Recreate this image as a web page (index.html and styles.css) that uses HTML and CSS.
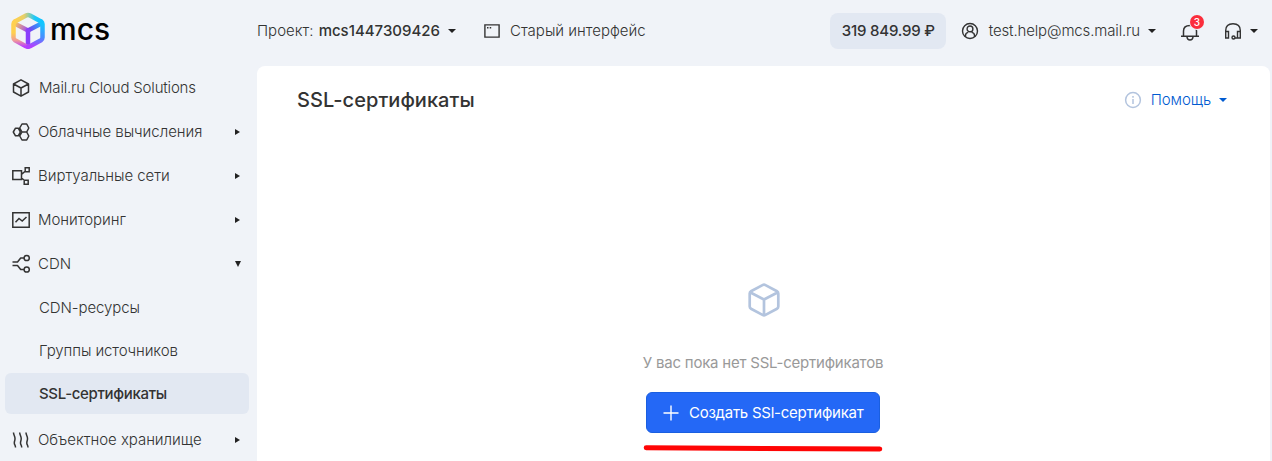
FILE: index.html
```html
<!DOCTYPE html>
<html lang="ru">
<head>
<meta charset="utf-8">
<title>SSL-сертификаты</title>
<link rel="stylesheet" href="styles.css">
</head>
<body>
<svg class="defs" width="0" height="0">
  <defs>
    <linearGradient id="g-left" x1="0" y1="0" x2="0" y2="1"><stop offset="0.45" stop-color="#ffd04f"/><stop offset="0.75" stop-color="#f09a9a"/><stop offset="1" stop-color="#b93cff"/></linearGradient>
    <linearGradient id="g-top" gradientUnits="userSpaceOnUse" x1="4" y1="0" x2="30" y2="0"><stop offset="0" stop-color="#ffd04f"/><stop offset="0.35" stop-color="#e8cf68"/><stop offset="0.75" stop-color="#20c8f8"/><stop offset="1" stop-color="#10c4ff"/></linearGradient>
    <linearGradient id="g-right" gradientUnits="userSpaceOnUse" x1="26" y1="8" x2="20" y2="34"><stop offset="0.1" stop-color="#14c6ff"/><stop offset="0.6" stop-color="#4a8cff"/><stop offset="1" stop-color="#b040ff"/></linearGradient>
    <linearGradient id="g-in" gradientUnits="userSpaceOnUse" x1="2" y1="9" x2="17" y2="17"><stop offset="0.1" stop-color="#ffd04f"/><stop offset="1" stop-color="#a04cf0"/></linearGradient>
    <linearGradient id="g-in2" gradientUnits="userSpaceOnUse" x1="31" y1="9" x2="17" y2="17"><stop offset="0" stop-color="#10c4ff"/><stop offset="1" stop-color="#7a3cf0"/></linearGradient>
  </defs>
</svg>
<div class="app">
  <aside class="sidebar">
    <a class="logo">
      <svg width="34" height="38" viewBox="0 0 34 38" fill="none" stroke-width="4.500" stroke-linejoin="round" stroke-linecap="round">
        <path stroke="url(#g-in)" d="M3.5 11.5 17 18.5"/>
        <path stroke="url(#g-in2)" d="M30.500 11.500 17 18.500"/>
        <path stroke="#8a3ffc" d="M17 18.500V34"/>
        <path stroke="url(#g-left)" d="M4 9.500Q2.500 10.400 2.500 12V25.500Q2.500 27.300 4 28.200L15 34.300Q16 34.800 17 34.800"/>
        <path stroke="url(#g-right)" d="M30 9.500Q31.500 10.400 31.500 12V25.500Q31.500 27.300 30 28.200L19 34.300Q18 34.800 17 34.800"/>
        <path stroke="url(#g-top)" d="M4 9.500 15 3.500Q17 2.400 19 3.500L30 9.500"/>
      </svg>
      <span class="logo-text">mcs</span>
    </a>
    <nav class="nav">
      <a class="item"><svg class="ico" viewBox="0 0 20 20"><path d="M10 1.800 17.500 6V14L10 18.200 2.500 14V6ZM2.500 6 10 10 17.500 6M10 10V18.200"/></svg><span class="brand">Mail.ru Cloud Solutions</span></a>
      <a class="item"><svg class="ico" viewBox="0 0 20 20"><path d="M4.500 6.200H7.300L9.300 10 7.300 13.800H4.500L2.300 10ZM11 2H15.700L17.800 6 15.700 10H11L8.700 6ZM15.700 10 17.800 14 15.700 18H11L8.700 14 11 10"/></svg><span>Облачные вычисления</span><i class="arr"></i></a>
      <a class="item"><svg class="ico sharp" viewBox="0 0 20 20"><path d="M1.800 4.800H10.500V13.500H1.800ZM14.200 1.800H18.200V5.800H14.200ZM13.200 14.200H17.200V18.200H13.200ZM10.500 8.300 14.500 5M10 11.500 13.500 14.500"/></svg><span>Виртуальные сети</span><i class="arr"></i></a>
      <a class="item"><svg class="ico sharp" viewBox="0 0 20 20"><path d="M1.800 2.800H18.200V17.200H1.800ZM4.500 12.300 8 8.500 11.200 11 15.500 7"/></svg><span>Мониторинг</span><i class="arr"></i></a>
      <a class="item"><svg class="ico" viewBox="0 0 20 20"><path d="M1.500 8H6.500L9.700 4H13M1.500 11.500H6.500L9.700 15.500H13"/><circle cx="15.700" cy="4" r="2.600"/><circle cx="15.700" cy="15.500" r="2.600"/></svg><span>CDN</span><i class="arr down"></i></a>
      <div class="sub">
        <a class="subitem"><span>CDN-ресурсы</span></a>
        <a class="subitem"><span>Группы источников</span></a>
        <a class="subitem active"><span>SSL-сертификаты</span></a>
      </div>
      <a class="item"><svg class="ico" viewBox="0 0 20 20"><path d="M2.500 2.500C2.500 5 4 6 4 8.500S3.300 11 3.300 13 4.500 15 4.500 17.500M8.700 2.500C8.700 5 10.200 6 10.200 8.500S9.500 11 9.500 13 10.700 15 10.700 17.500M15 2.500C15 5 16.500 6 16.500 8.500S15.800 11 15.800 13 17 15 17 17.500"/></svg><span>Объектное хранилище</span><i class="arr"></i></a>
    </nav>
  </aside>
  <div class="main">
    <header class="header">
      <span class="project">Проект: <b>mcs1447309426</b></span><i class="caret c1"></i>
      <svg class="win" width="16" height="14" viewBox="0 0 16 14"><path fill="none" stroke="#333" stroke-width="1.400" d="M.9.900H15.100V13.100H.9Z"/><path fill="#333" d="M3 3h1.500v1.500H3zM5.700 3h1.500v1.500H5.700z"/></svg>
      <span>Старый интерфейс</span>
      <span class="balance">319 849.99 ₽</span>
      <svg class="user" width="18" height="18" viewBox="0 0 18 18" fill="none" stroke="#333" stroke-width="1.400"><circle cx="9" cy="9" r="7.500"/><circle cx="9" cy="6.900" r="2.900"/><path d="M4.500 14.800V13.500Q4.500 10.900 7.300 10.400M13.500 14.800V13.500Q13.500 10.900 10.700 10.400"/></svg>
      <span class="email">test.help@mcs.mail.ru</span><i class="caret c2"></i>
      <span class="bell">
        <svg width="20" height="20" viewBox="0 0 20 20" fill="none" stroke="#333" stroke-width="1.500"><path d="M1 14.300H19M3.500 14.300V9Q3.500 3.500 10 3.500 16.500 3.500 16.500 9V14.300M7 15Q7.300 18 10 18T13 15"/></svg>
        <span class="badge">3</span>
      </span>
      <svg class="head" width="18" height="18" viewBox="0 0 18 18" fill="none" stroke="#333" stroke-width="1.400"><path d="M1.700 10V8.500Q1.700 1.700 9 1.700T16.300 8.500V10M1.700 9.500H4.500V16H1.700ZM13.500 9.500H16.300V16H13.500ZM13.500 16H11"/><circle cx="9.500" cy="15.500" r="1.500"/></svg>
      <i class="caret c3"></i>
    </header>
    <section class="panel">
      <div class="panel-head">
        <h1 class="title">SSL-сертификаты</h1>
        <a class="help">
          <svg width="18" height="18" viewBox="0 0 18 18" fill="none" stroke="#b3c4de" stroke-width="1.500"><circle cx="9" cy="9" r="7.400"/><path d="M9 8V13M9 5V6.700"/></svg>
          <span>Помощь</span><i class="caret blue"></i>
        </a>
      </div>
      <div class="empty">
        <svg class="cube" width="32" height="34" viewBox="0 0 32 34" fill="none" stroke="#b3c4de" stroke-width="2.700" stroke-linejoin="round" stroke-linecap="round"><path d="M14.500 2.100Q16 1.300 17.500 2.100L29 8.300Q30.300 9 30.300 10.500V23.500Q30.300 25 29 25.700L17.500 31.900Q16 32.700 14.500 31.900L3 25.700Q1.700 25 1.700 23.500V10.500Q1.700 9 3 8.300ZM2.500 9.500 16 16.500 29.500 9.500M16 16.500V32"/></svg>
        <p class="note">У вас пока нет SSL-сертификатов</p>
        <button class="create"><svg width="16" height="16" viewBox="0 0 16 16"><path stroke="#fff" stroke-width="1.400" d="M8 .5V15.500M.5 8H15.500"/></svg><span>Создать SSl-сертификат</span></button>
        <svg class="mark" width="240" height="8" viewBox="0 0 240 8"><path stroke="#ff0505" stroke-width="5" stroke-linecap="round" d="M3.200 3.800 236.800 5"/></svg>
      </div>
    </section>
  </div>
</div>
</body>
</html>
```
FILE: styles.css
```css
* { box-sizing: border-box; }
body { margin: 0; width: 1272px; height: 461px; overflow: hidden; background: #f0f3f8; color: #333; font: 300 15px/20px Inter, "Liberation Sans", sans-serif; }
.defs { display: block; height: 0; }
.app { display: flex; height: 461px; }
span { white-space: nowrap; }
svg { flex: none; display: block; }

.sidebar { width: 257px; flex: none; display: flex; flex-direction: column; }
.logo { height: 66px; flex: none; display: flex; align-items: flex-start; padding: 12px 0 0 11px; }
.logo-text { font: 500 30px/38px Inter, sans-serif; letter-spacing: 0; color: #000; margin-left: 5px; margin-top: -2px; }
.nav { display: flex; flex-direction: column; }
.item { height: 44px; display: flex; align-items: center; padding: 0 15px 0 11px; gap: 7px; letter-spacing: -0.040px; }
.brand { letter-spacing: -0.180px; padding-left: 1px; }
.ico { width: 20px; height: 20px; fill: none; stroke: #333; stroke-width: 1.500; stroke-linejoin: round; }
.sharp { stroke-linejoin: miter; }
.arr { margin-left: auto; margin-right: 2px; border-left: 5px solid #222; border-top: 3.500px solid transparent; border-bottom: 3.500px solid transparent; }
.arr.down { margin-right: 1px; border-top: 6px solid #222; border-bottom: 0; border-left: 3.500px solid transparent; border-right: 3.500px solid transparent; }
.sub { display: flex; flex-direction: column; padding: 0 8px 4px 5px; letter-spacing: -0.100px; }
.subitem { height: 43px; display: flex; align-items: center; padding-left: 34px; }
.subitem.active { height: 41px; margin-top: 1px; border-radius: 6px; background: #e2e8f2; font-weight: 500; letter-spacing: -0.320px; }

.main { flex: 1; display: flex; flex-direction: column; padding-right: 2px; }
.header { height: 66px; flex: none; display: flex; align-items: center; padding-bottom: 4px; }
b { font-weight: 500; margin-left: 1px; }
.caret { flex: none; border-top: 4px solid #222; border-left: 4px solid transparent; border-right: 4px solid transparent; }
.c1 { margin-left: 8px; margin-right: 28px; }
.win { margin-right: 10px; }
.balance { height: 36px; width: 116px; margin-left: auto; display: flex; align-items: center; padding-left: 12px; background: #e2e8f2; border-radius: 8px; font-weight: 500; letter-spacing: -0.200px; }
.user { margin: 0 10px 0 15px; }
.email { letter-spacing: -0.150px; }
.c2 { margin-left: 8px; margin-right: 24px; }
.bell { position: relative; margin-top: 2px; }
.badge { position: absolute; left: 10px; top: -7px; width: 14px; height: 14px; border-radius: 50%; background: #fb2d3c; color: #fff; font: 500 10px/14px Inter, sans-serif; text-align: center; box-shadow: 0 0 0 1px #f0f3f8; }
.head { margin: 0 8px 0 24px; }
.c3 { margin-right: 12px; }

.panel { flex: 1; background: #fff; border-radius: 8px 8px 0 0; display: flex; flex-direction: column; }
.panel-head { display: flex; align-items: center; justify-content: space-between; height: 68px; padding: 0 43px 0 40px; }
.title { margin: 0; font: 500 20px/28px Inter, sans-serif; letter-spacing: 0.050px; }
.help { display: flex; align-items: center; color: #005bd1; letter-spacing: -0.100px; }
.help svg { margin-right: 9px; }
.blue { border-top-color: #005bd1; margin-left: 8px; }
.empty { display: flex; flex-direction: column; align-items: center; padding: 149px 1px 0 0; }
.cube { margin-left: 2px; }
.note { margin: 36px 0 19px; color: #999; font-weight: 400; line-height: 20px; letter-spacing: -0.220px; }
.create { width: 234px; height: 41px; display: flex; align-items: center; padding: 0 0 0 16px; border: 1px solid #1a5fe0; border-radius: 6px; background: #2468f6; color: #fff; font: 400 15px/20px Inter, sans-serif; letter-spacing: -0.260px; }
.create svg { margin-right: 10px; }
.mark { margin-top: 11px; }
```
